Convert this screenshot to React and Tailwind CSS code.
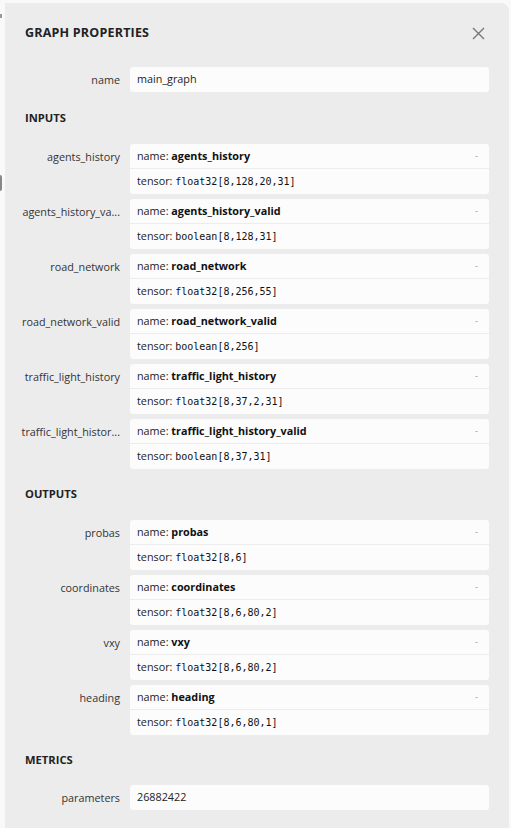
const inputs = [
  { label: "agents_history", name: "agents_history", tensor: "float32[8,128,20,31]" },
  { label: "agents_history_va...", name: "agents_history_valid", tensor: "boolean[8,128,31]" },
  { label: "road_network", name: "road_network", tensor: "float32[8,256,55]" },
  { label: "road_network_valid", name: "road_network_valid", tensor: "boolean[8,256]" },
  { label: "traffic_light_history", name: "traffic_light_history", tensor: "float32[8,37,2,31]" },
  { label: "traffic_light_histor...", name: "traffic_light_history_valid", tensor: "boolean[8,37,31]" },
];

const outputs = [
  { label: "probas", name: "probas", tensor: "float32[8,6]" },
  { label: "coordinates", name: "coordinates", tensor: "float32[8,6,80,2]" },
  { label: "vxy", name: "vxy", tensor: "float32[8,6,80,2]" },
  { label: "heading", name: "heading", tensor: "float32[8,6,80,1]" },
];

const sans = { fontFamily: '"Open Sans", "Noto Sans", sans-serif' };
const mono = { fontFamily: '"DejaVu Sans Mono", "Liberation Mono", monospace' };

function Header({ children }) {
  return (
    <div className="h-[14px] text-[11.2px] leading-[14px] font-bold text-[#222]">{children}</div>
  );
}

function Label({ children }) {
  return (
    <div className="w-[95px] shrink-0 flex justify-end text-[10.8px] leading-[25px] text-[#333] whitespace-nowrap">
      {children}
    </div>
  );
}

function Argument({ item }) {
  return (
    <div className="flex gap-[10px]">
      <Label>{item.label}</Label>
      <div className="flex-1 bg-[#fcfcfc] rounded-[3px] text-[10.8px] text-[#222]">
        <div className="flex items-center h-[25px] px-[7px] border-b border-[#ececec]">
          <span>
            name: <b className="font-bold text-[#111]">{item.name}</b>
          </span>
          <span className="ml-auto mr-[4px] text-[9px] text-[#999]">-</span>
        </div>
        <div className="flex items-center h-[25px] px-[7px]">
          <span>tensor:&nbsp;</span>
          <span className="text-[10px] text-[#111]" style={mono}>
            {item.tensor}
          </span>
        </div>
      </div>
    </div>
  );
}

function Attribute({ label, value }) {
  return (
    <div className="flex gap-[10px]">
      <Label>{label}</Label>
      <div className="flex-1 h-[25px] flex items-center px-[7px] bg-[#fcfcfc] rounded-[3px] text-[10.8px] text-[#222]">
        {value}
      </div>
    </div>
  );
}

export default function App() {
  return (
    <div className="w-[511px] h-[828px] bg-[#f9f9f9] flex overflow-hidden" style={sans}>
      <div className="w-[5px] shrink-0 relative">
        <div className="absolute left-0 top-[14px] w-[2px] h-[4px] bg-[#999]" />
        <div className="absolute left-0 top-[175px] w-[2px] h-[16px] bg-[#888] rounded-r" />
      </div>
      <div className="w-[504px] mt-[3px] bg-[#ececec] rounded-tr-[8px] pl-[20px] pr-[20px] flex flex-col">
        <div className="flex items-center h-[28px] mt-[16px]">
          <div className="text-[12.5px] font-bold text-[#222] tracking-[0.2px]">GRAPH PROPERTIES</div>
          <svg className="ml-auto mr-[4px]" width="13" height="13" viewBox="0 0 13 13">
            <path d="M1 1L12 12M12 1L1 12" stroke="#777" strokeWidth="1.4" />
          </svg>
        </div>
        <div className="mt-[20px]">
          <Attribute label="name" value="main_graph" />
        </div>
        <div className="mt-[19px]">
          <Header>INPUTS</Header>
        </div>
        <div className="mt-[19px] flex flex-col gap-[5px]">
          {inputs.map((i) => (
            <Argument key={i.name} item={i} />
          ))}
        </div>
        <div className="mt-[18px]">
          <Header>OUTPUTS</Header>
        </div>
        <div className="mt-[19px] flex flex-col gap-[5px]">
          {outputs.map((i) => (
            <Argument key={i.name} item={i} />
          ))}
        </div>
        <div className="mt-[18px]">
          <Header>METRICS</Header>
        </div>
        <div className="mt-[18px]">
          <Attribute label="parameters" value="26882422" />
        </div>
      </div>
    </div>
  );
}
